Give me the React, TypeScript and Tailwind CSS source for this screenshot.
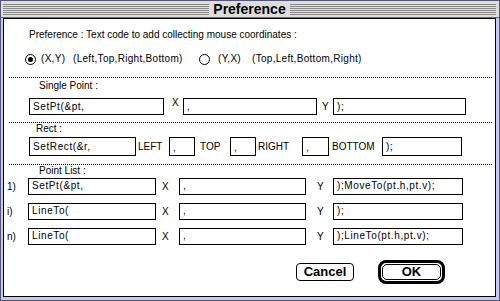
import type { ReactNode } from 'react'

const sans = "font-['Liberation_Sans',Arial,sans-serif]"
const caps = "font-['Liberation_Sans_Narrow','Liberation_Sans',Arial,sans-serif] text-[10px]"

function Stripes() {
  return (
    <div className="flex-1 flex flex-col gap-px pt-[3px]">
      {[0, 1, 2, 3, 4, 5].map((i) => (
        <div key={i} className="h-px bg-[#8a8a8a]" />
      ))}
    </div>
  )
}

function Field({ className, children, pad = 'items-end pb-[1px]' }: { className: string; children?: ReactNode; pad?: string }) {
  return (
    <div className={`${className} shrink-0 border border-black bg-white flex ${pad} pl-[3px] whitespace-nowrap tracking-[0.6px]`}>
      {children}
    </div>
  )
}

function Radio({ on }: { on?: boolean }) {
  return (
    <div className="w-[11px] h-[11px] shrink-0 rounded-full border border-black flex items-center justify-center">
      {on && <div className="w-[5px] h-[5px] rounded-full bg-black" />}
    </div>
  )
}

function Dots() {
  return <div className="ml-[5px] mr-[3px] border-t border-dotted border-black" />
}

function PointRow({ n, first, last, cls }: { n: string; first: string; last: string; cls: string }) {
  return (
    <div className={`flex items-center h-[17px] ${cls}`}>
      <div className="w-[24px] pl-[3px]">{n}</div>
      <Field className="w-[128px] h-[17px]" pad="items-start pt-[1px]">{first}</Field>
      <div className="w-[23px] pl-[6px]">X</div>
      <Field className="w-[127px] h-[17px]" pad="items-start pt-[1px]">,</Field>
      <div className="w-[27px] pl-[11px]">Y</div>
      <Field className="w-[130px] h-[17px]" pad="items-start pt-[1px]">{last}</Field>
    </div>
  )
}

export default function App() {
  return (
    <div className="w-[500px] h-[301px] border border-[#555577] bg-[#c8c8f0] flex flex-col overflow-hidden">
      <div className="h-[17px] shrink-0 bg-[#dddddd] border-b border-[#666688] flex pl-[2px] pr-[3px]">
        <Stripes />
        <div className={`w-[81px] text-center ${sans} font-bold text-[14px] leading-[16px] text-black`}>Preference</div>
        <Stripes />
      </div>

      <div className={`flex-1 ml-[2px] mr-[3px] mb-[3px] border border-black bg-white ${sans} text-[10px] leading-[12px] text-black flex flex-col`}>
        <div className="mt-[10px] pl-[25px]">Preference : Text code to add collecting mouse coordinates :</div>

        <div className="mt-[12px] h-[12px] flex items-center pl-[21px] whitespace-nowrap tracking-[0.3px]">
          <Radio on />
          <span className="ml-[5px] w-[32px]">(X,Y)</span>
          <span className="w-[126px]">(Left,Top,Right,Bottom)</span>
          <Radio />
          <span className="ml-[8px] w-[34px]">(Y,X)</span>
          <span>(Top,Left,Bottom,Right)</span>
        </div>

        <div className="mt-[12px]">
          <Dots />
        </div>

        <div className="mt-[2px] pl-[35px]">Single Point :</div>
        <div className="mt-[6px] flex h-[17px] pl-[25px]">
          <Field className="w-[135px] h-[17px]">SetPt(&amp;pt,</Field>
          <div className="w-[19px] pl-[8px] leading-[10px]">X</div>
          <Field className="w-[134px] h-[17px]">,</Field>
          <div className="w-[16px] pl-[5px] pt-[3px]">Y</div>
          <Field className="w-[133px] h-[17px]">);</Field>
        </div>

        <div className="mt-[7px]">
          <Dots />
        </div>

        <div className="pl-[32px]">Rect :</div>
        <div className="mt-[2px] flex items-center h-[19px] pl-[25px]">
          <Field className="w-[107px] h-[19px]" pad="items-center">SetRect(&amp;r,</Field>
          <div className={`w-[33px] pl-[2px] ${caps}`}>LEFT</div>
          <Field className="w-[26px] h-[19px]" pad="items-end pb-[1px]">,</Field>
          <div className={`w-[35px] pl-[5px] ${caps}`}>TOP</div>
          <Field className="w-[26px] h-[19px]" pad="items-end pb-[1px]">,</Field>
          <div className={`w-[46px] pl-[2px] ${caps}`}>RIGHT</div>
          <Field className="w-[27px] h-[19px]" pad="items-end pb-[1px]">,</Field>
          <div className={`w-[53px] pl-[3px] ${caps}`}>BOTTOM</div>
          <Field className="w-[80px] h-[19px]" pad="items-center">);</Field>
        </div>

        <div className="mt-[8px]">
          <Dots />
        </div>

        <div className="pl-[35px]">Point List :</div>
        <PointRow cls="mt-[1px]" n="1)" first="SetPt(&pt," last=");MoveTo(pt.h,pt.v);" />
        <PointRow cls="mt-[8px]" n="i)" first="LineTo(" last=");" />
        <PointRow cls="mt-[8px]" n="n)" first="LineTo(" last=");LineTo(pt.h,pt.v);" />

        <div className={`mt-[15px] flex items-center pl-[292px] ${sans} font-bold text-[13px]`}>
          <div className="w-[58px] h-[18px] border border-black rounded-[4px] flex items-center justify-center">Cancel</div>
          <div className="ml-[24px] w-[67px] h-[24px] border-[3px] border-black rounded-[8px] p-px">
            <div className="h-full border border-black rounded-[5px] flex items-center justify-center">OK</div>
          </div>
        </div>
      </div>
    </div>
  )
}
